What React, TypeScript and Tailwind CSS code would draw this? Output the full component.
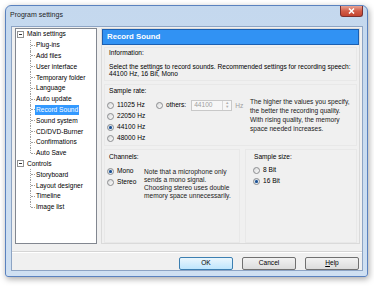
import React from 'react';

const tree = [
  {
    label: 'Main settings',
    children: [
      'Plug-ins',
      'Add files',
      'User interface',
      'Temporary folder',
      'Language',
      'Auto update',
      'Record Sound',
      'Sound system',
      'CD/DVD-Burner',
      'Confirmations',
      'Auto Save',
    ],
  },
  { label: 'Controls', children: ['Storyboard', 'Layout designer', 'Timeline', 'Image list'] },
];

function Radio({ label, checked, x }: { label: string; checked?: boolean; x?: string }) {
  return (
    <div className={`flex items-center gap-[3px] h-[11px] ${x ?? ''}`}>
      <span className="w-[7px] h-[7px] rounded-full border border-[#8b8d8f] bg-gradient-to-br from-[#d9dadb] to-[#fbfbfb] flex items-center justify-center shrink-0">
        {checked && <span className="w-[3px] h-[3px] rounded-full bg-[#1d4f8f] shadow-[0_0_1px_#5ea0e8]" />}
      </span>
      <span>{label}</span>
    </div>
  );
}

function Button({ children, primary }: { children: React.ReactNode; primary?: boolean }) {
  return (
    <div
      className={`w-[54px] h-[13px] rounded-[2px] border flex items-center justify-center ${
        primary
          ? 'border-[#3c7fb1] bg-gradient-to-b from-[#eaf6fd] to-[#bee6fd]'
          : 'border-[#707070] bg-gradient-to-b from-[#f2f2f2] to-[#dcdcdc]'
      }`}
    >
      {children}
    </div>
  );
}

function Tree() {
  return (
    <div className="w-[82px] h-[216px] bg-white border border-[#828790] flex flex-col">
      {tree.map((group) => (
        <div key={group.label} className="flex flex-col">
          <div className="flex items-center h-[10.8px]">
            <span className="ml-[1px] w-[7px] h-[7px] border border-[#919191] bg-white flex items-center justify-center">
              <span className="w-[3px] h-px bg-[#333]" />
            </span>
            <span className="ml-[3px]">{group.label}</span>
          </div>
          {group.children.map((c, i) => (
            <div key={c} className="flex items-center h-[10.8px] relative">
              <span
                className={`absolute left-[14px] top-0 w-0 border-l border-dotted border-[#a0a0a0] ${
                  i === group.children.length - 1 ? 'h-[5px]' : 'h-full'
                }`}
              />
              <span className="ml-[15px] w-[4px] h-0 border-t border-dotted border-[#a0a0a0]" />
              <span
                className={`px-[1px] leading-[10px] ${
                  c === 'Record Sound' ? 'bg-[#3399ff] text-white' : ''
                }`}
              >
                {c}
              </span>
            </div>
          ))}
        </div>
      ))}
    </div>
  );
}

export default function App() {
  return (
    <div className="w-[374px] h-[286px] bg-white pt-[5px] pl-[5px] font-['Liberation_Sans',Arial,sans-serif] text-[6.6px] text-black leading-none">
      <div className="w-[363px] h-[272px] rounded-t-[6px] rounded-b-[3px] border border-[#5a82bf] bg-gradient-to-b from-[#c4d8ee] to-[#cfe0f2] shadow-[1px_2px_6px_rgba(0,0,0,0.35)] flex flex-col">
        <div className="h-[20px] flex items-start justify-between">
          <span className="mt-[5px] ml-[4px] text-[7px] text-[#1e1e1e]">Program settings</span>
          <div className="mt-[0px] mr-[4px] w-[23px] h-[11px] rounded-b-[3px] border border-t-0 border-[#7a3030] bg-gradient-to-b from-[#e8a394] via-[#d25c48] to-[#c4442f] flex items-center justify-center">
            <svg width="7" height="6" viewBox="0 0 7 6">
              <path d="M1 0.5 L6 5.5 M6 0.5 L1 5.5" stroke="white" strokeWidth="1.5" />
            </svg>
          </div>
        </div>
        <div className="ml-[5px] mr-[4px] h-[245px] border border-[#8da4c4] bg-[#f0f0f0] flex flex-col">
          <div className="pt-[1px] pl-[3px] pr-[2px] flex gap-[4px]">
            <Tree />
            <div className="w-[259px] h-[216px] border border-[#dadada] flex flex-col">
              <div className="h-[16px] bg-[#3192f3] border border-[#1b5fb1] flex items-center pl-[4px] text-white font-bold text-[7.8px]">
                Record Sound
              </div>
              <div className="mx-[2px] mt-[2px] h-[34px] border border-[#e8e8e8] px-[4px] pt-[1px] flex flex-col">
                <div className="leading-[8px]">Information:</div>
                <div className="mt-[5.5px] leading-[7px]">
                  Select the settings to record sounds. Recommended settings for recording speech:
                  <br />
                  44100 Hz, 16 Bit, Mono
                </div>
              </div>
              <div className="mx-[2px] mt-[3px] h-[62px] border border-[#e8e8e8] pl-[2px] pt-[2px] flex flex-col">
                <div className="ml-[2px] leading-[8px]">Sample rate:</div>
                <div className="flex mt-[2px]">
                  <div className="flex flex-col mt-[2.5px] w-[49px]">
                    <Radio label="11025 Hz" />
                    <Radio label="22050 Hz" />
                    <Radio label="44100 Hz" checked />
                    <Radio label="48000 Hz" />
                  </div>
                  <div className="flex items-start mt-[2.5px] w-[94px]">
                    <Radio label="others:" />
                    <div className="ml-[5px] mt-[0px] w-[41px] h-[11px] border border-[#c8c8c8] bg-[#f7f7f7] flex items-center">
                      <span className="ml-[2px] text-[#a0a0a0] flex-1">44100</span>
                      <div className="w-[9px] h-full flex flex-col border-l border-[#d8d8d8]">
                        <span className="flex-1 flex items-center justify-center text-[#b0b0b0] text-[4px]">▲</span>
                        <span className="flex-1 flex items-center justify-center text-[#b0b0b0] text-[4px]">▼</span>
                      </div>
                    </div>
                    <span className="ml-[3px] mt-[3px] text-[#a0a0a0]">Hz</span>
                  </div>
                  <div className="leading-[9px] text-[#1a1a1a]">
                    The higher the values you specify,
                    <br />
                    the better the recording quality.
                    <br />
                    With rising quality, the memory
                    <br />
                    space needed increases.
                  </div>
                </div>
              </div>
              <div className="mx-[2px] mt-[3px] flex gap-[5px] h-[94px]">
                <div className="w-[136px] border border-[#e8e8e8] pl-[2px] pt-[3px] flex flex-col">
                  <div className="ml-[2px] leading-[8px]">Channels:</div>
                  <div className="flex mt-[4.5px]">
                    <div className="flex flex-col w-[37px]">
                      <Radio label="Mono" checked />
                      <Radio label="Stereo" />
                    </div>
                    <div className="mt-[2.5px] leading-[8px] text-[#1a1a1a]">
                      Note that a microphone only
                      <br />
                      sends a mono signal.
                      <br />
                      Choosing stereo uses double
                      <br />
                      memory space unnecessarily.
                    </div>
                  </div>
                </div>
                <div className="flex-1 border border-[#e8e8e8] pl-[7px] pt-[3px] flex flex-col">
                  <div className="ml-[1px] leading-[8px]">Sample size:</div>
                  <div className="flex flex-col mt-[3.5px]">
                    <Radio label="8 Bit" />
                    <Radio label="16 Bit" checked />
                  </div>
                </div>
              </div>
            </div>
          </div>
          <div className="mt-[7px] h-[2px] border-t border-b border-t-[#d5d5d5] border-b-white" />
          <div className="mt-[4px] pr-[3px] flex justify-end gap-[9px]">
            <Button primary>OK</Button>
            <Button>Cancel</Button>
            <Button>
              <span className="underline">H</span>elp
            </Button>
          </div>
        </div>
      </div>
    </div>
  );
}
